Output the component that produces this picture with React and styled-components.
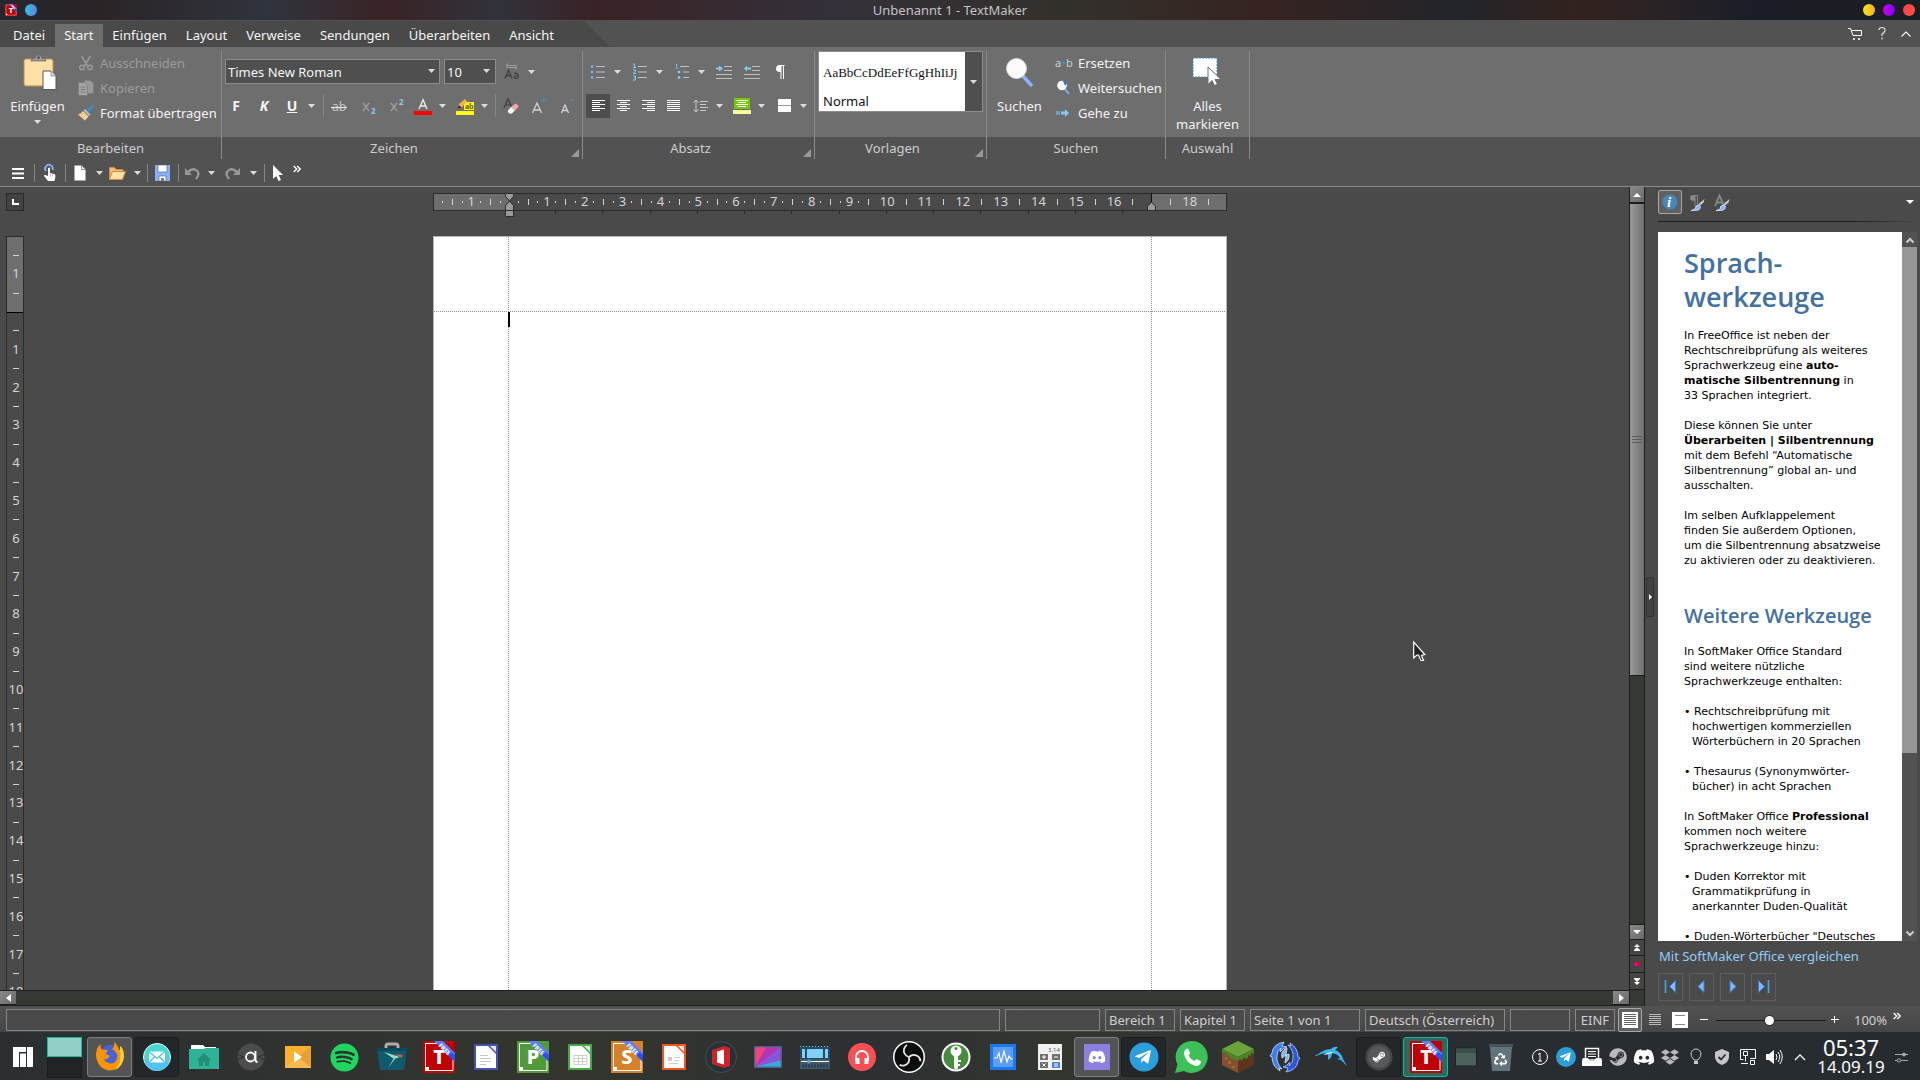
import React from 'react';
import styled, { createGlobalStyle, css } from 'styled-components';
import { FaSpotify, FaDiscord, FaTelegramPlane, FaSteamSymbol, FaSteam, FaDropbox, FaRecycle } from 'react-icons/fa';

const GlobalStyle = createGlobalStyle`
    * {
        box-sizing: border-box;
    }

    body {
        margin: 0;
        overflow: hidden;
        background: #4a4a4a;
        font-family: 'Noto Sans', 'Open Sans', sans-serif;
        font-size: 13px;
        color: #f4f4f4;
    }

    button, select, input {
        font: inherit;
        color: inherit;
        margin: 0;
    }

    button {
        display: flex;
        align-items: center;
        justify-content: center;
        padding: 0;
        border: 0;
        background: none;
    }

    svg {
        display: block;
        flex: none;
        overflow: visible;
    }

    p, h1, h2, ul {
        margin: 0;
        padding: 0;
    }
`;

const Screen = styled.div`
    display: flex;
    flex-direction: column;
    height: 100vh;
`;

/* ---------- title bar ---------- */

const TitleBar = styled.header`
    display: flex;
    align-items: center;
    height: 20px;
    padding: 0 5px;
    color: #c4c4c6;
    background: linear-gradient(90deg, #25272e 0, #2a2427 5%, #30343d 14%, #3a2326 20%, #30323b 26%, #3a2326 31%, #33303a 43%, #33302b 56%, #362321 66%, #22252a 76%, #33221f 82%, #2a2325 86%, #1b1e26 91%, #1a1d24 100%);
`;

const Title = styled.span`
    padding-right: 20px;
`;

const TitleSide = styled.div`
    display: flex;
    flex: 1;
    gap: 8px;
    justify-content: ${p => (p.$end ? 'flex-end' : 'flex-start')};
`;

const Dot = styled.button`
    width: 12px;
    height: 12px;
    border-radius: 50%;
    background: ${p => p.$color};
`;

/* ---------- ribbon ---------- */

const TabRow = styled.nav`
    display: flex;
    align-items: flex-end;
    height: 27px;
    background: #525252;
`;

const TabStrip = styled.div`
    display: flex;
    align-items: flex-end;
    height: 26px;
    padding: 0 46px 0 4px;
    background: #494949;
    clip-path: polygon(0 0, calc(100% - 26px) 0, 100% 100%, 0 100%);
`;

const Tab = styled.button`
    height: 23px;
    padding: 0 10px 2px 9px;
    background: ${p => (p.$active ? '#6e6e6e' : 'none')};
`;

const TabTools = styled.div`
    display: flex;
    flex: 1;
    align-self: center;
    align-items: center;
    justify-content: flex-end;
    gap: 15px;
    padding-right: 9px;
`;

const Ribbon = styled.section`
    display: flex;
    height: 115px;
    padding: 4px 0 3px;
    background: linear-gradient(#6e6e6e 90px, #525252 90px);
`;

const Group = styled.div`
    display: flex;
    flex-direction: column;
    width: ${p => p.$w}px;
    border-right: 1px solid #8a8a8a;
`;

const GroupBody = styled.div`
    display: flex;
    height: 86px;
    padding-left: ${p => p.$pad || 0}px;
    flex-direction: ${p => (p.$column ? 'column' : 'row')};
`;

const GroupLabel = styled.div`
    display: flex;
    align-items: center;
    justify-content: center;
    flex: 1;
    position: relative;
    padding-right: ${p => (p.$corner ? 16 : 0)}px;
    color: #cdcdcd;

    svg {
        position: absolute;
        right: 3px;
        bottom: 2px;
    }
`;

const BigButton = styled.button`
    flex-direction: column;
    justify-content: flex-start;
    width: ${p => p.$w}px;
    height: 86px;
    padding-top: 3px;
    line-height: 18px;
`;

const BigIcon = styled.span`
    display: flex;
    align-items: center;
    height: 37px;
    margin-bottom: 6px;
`;

const SmallList = styled.div`
    display: flex;
    flex-direction: column;
    padding-left: 3px;
`;

const SmallButton = styled.button`
    justify-content: flex-start;
    gap: 6px;
    height: 25px;
    padding-bottom: 2px;
    color: ${p => (p.disabled ? '#9c9c9c' : '#f4f4f4')};
`;

const ToolRow = styled.div`
    display: flex;
    align-items: center;
    gap: ${p => p.$gap || 0}px;
    height: 25px;
    margin-top: ${p => (p.$first ? 8 : 9)}px;
    padding-left: ${p => p.$pad || 0}px;
`;

const Tool = styled.button`
    width: ${p => p.$w || 28}px;
    height: 24px;
    font-size: 14px;
    margin-right: ${p => p.$after || 0}px;
    background: ${p => (p.$active ? '#4e4e4e' : 'none')};
`;

const DropTool = styled.button`
    width: 38px;
    height: 24px;
    margin-right: ${p => p.$after || 0}px;
    margin-left: ${p => p.$before || 0}px;

    > span:first-child {
        display: flex;
        width: 24px;
        justify-content: center;
    }

    > span:last-child {
        display: flex;
        width: 14px;
        justify-content: center;
    }
`;

const Divider = styled.i`
    flex: none;
    width: 1px;
    height: ${p => p.$h || 23}px;
    margin: 0 ${p => p.$r}px 0 ${p => p.$l}px;
    background: #858585;
`;

const SelectBox = styled.label`
    display: flex;
    position: relative;
    width: ${p => p.$w}px;
    height: 25px;

    select {
        appearance: none;
        width: 100%;
        padding: 0 2px;
        border: 1px solid #8c8c8c;
        border-radius: 0;
        background: #4f4f4f;
    }

    svg {
        position: absolute;
        right: ${p => p.$arrow}px;
        top: 10px;
        pointer-events: none;
    }
`;

const StyleBox = styled.div`
    display: flex;
    width: 165px;
    height: 61px;
    border: 1px solid #8c8c8c;
    background: #fff;
`;

const StylePreview = styled.button`
    flex: 1;
    flex-direction: column;
    align-items: flex-start;
    justify-content: flex-start;
    padding: 12px 0 0 4px;
    color: #111;
    line-height: 18px;
    gap: 10px;

    span:first-child {
        font-family: 'Liberation Serif', serif;
        font-size: 13px;
    }
`;

const StyleMore = styled.button`
    width: 17px;
    background: #4f4f4f;
`;

const QuickBar = styled.div`
    display: flex;
    align-items: center;
    height: 25px;
    padding: 0 0 2px 10px;
    background: #525252;
    border-bottom: 1px solid #8a8a8a;
`;

const Quick = styled.button`
    flex: none;
    width: ${p => p.$w || 24}px;
    height: 22px;
`;

/* ---------- work area ---------- */

const Main = styled.main`
    display: flex;
    flex: 1;
    min-height: 0;
`;

const EditorColumn = styled.div`
    display: flex;
    flex-direction: column;
    flex: 1;
    min-width: 0;
`;

const Workspace = styled.div`
    display: grid;
    flex: 1;
    min-height: 0;
    grid-template-columns: 31px 1fr;
    grid-template-rows: 49px minmax(0, 1fr);
    overflow: hidden;
    background: #4a4a4a;
`;

const TabKind = styled.button`
    width: 18px;
    height: 18px;
    margin: 6px 0 0 6px;
    border: 1px solid #2b2b2b;
    background: #404340;
`;

const RulerHolder = styled.div`
    position: relative;
    width: 794px;
    margin: 6px auto 0;
`;

const HRuler = styled.div`
    display: grid;
    grid-template-columns: 1fr repeat(20, 2fr) 1fr;
    height: 18px;
    color: #d4d4d4;
    box-shadow: inset 0 0 0 1px #2b2b2b;
    background: linear-gradient(90deg, #6e6e6e 76px, #4a4a4a 76px, #4a4a4a calc(100% - 76px), #6e6e6e calc(100% - 76px));
`;

const HCell = styled.div`
    display: flex;
    align-items: center;
    min-width: 0;
`;

const Tick = styled.i`
    flex: none;
    width: ${p => (p.$vertical ? 6 : 1)}px;
    height: ${p => (p.$vertical ? 1 : 6)}px;
    background: #d4d4d4;
`;

const Mark = styled.span`
    display: flex;
    flex: 1;
    align-items: center;
    justify-content: center;
    line-height: 16px;

    b {
        width: ${p => (p.$dots ? 17 : 20)}px;
        padding-bottom: 2px;
        font-weight: 400;
        text-align: center;
    }

    i {
        width: 1px;
        height: 2px;
        background: #d4d4d4;
    }
`;

const TabStops = styled.div`
    display: grid;
    grid-template-columns: repeat(13, 1fr);
    width: 614px;
    height: 3px;
    margin-left: 76px;

    i {
        border-right: 1px solid #2b2b2b;
    }
`;

const Marker = styled.svg`
    position: absolute;
    top: 0;
    left: ${p => p.$left};
`;

const VRulerHolder = styled.div`
    width: 18px;
    margin-left: 6px;
    overflow: hidden;
`;

const VRuler = styled.div`
    display: grid;
    grid-template-rows: 1fr repeat(29, 2fr) 1fr;
    height: 1134px;
    color: #d4d4d4;
    box-shadow: inset 0 0 0 1px #2b2b2b;
    background: linear-gradient(#6e6e6e 76px, #000 76px, #000 77px, #4a4a4a 77px);
`;

const VCell = styled.div`
    display: flex;
    flex-direction: column;
    align-items: center;
    min-height: 0;
`;

const Page = styled.article`
    position: relative;
    width: 794px;
    height: 1123px;
    margin: 0 auto;
    border: 1px solid #b4b4b4;
    background: #fff;
`;

const Guide = styled.i`
    position: absolute;
    background: repeating-linear-gradient(${p => (p.$across ? '90deg' : '180deg')}, #8e8e8e 0 1px, #fff 1px 2px);
    ${p => (p.$across ? 'left: 0; right: 0; top: 74px; height: 1px;' : 'top: 0; bottom: 0; width: 1px;')}
    ${p => p.$side && `${p.$side}: 74px;`}
`;

const Caret = styled.i`
    position: absolute;
    left: 74px;
    top: 75px;
    width: 2px;
    height: 15px;
    background: #000;
`;

const Pointer = styled.svg`
    position: absolute;
    left: 1413px;
    top: 641px;
`;

const HScroll = styled.div`
    display: flex;
    justify-content: space-between;
    height: 16px;
    border: 1px solid #1f1f1f;
    border-width: 1px 0;
    background: #363833;
`;

const VScroll = styled.div`
    display: flex;
    flex-direction: column;
    width: 16px;
    padding-bottom: 16px;
    background: #363833;
    border: 1px solid #1c1c1c;
    border-width: 0 1px;
`;

const ScrollButton = styled.button`
    flex: none;
    width: ${p => p.$w || 14}px;
    height: ${p => p.$h}px;
    border-bottom: 1px solid #1c1c1c;
    background: ${p => (p.$flat ? '#444644' : 'linear-gradient(135deg, #8a8a8a, #6a6a6a)')};
`;

const Thumb = styled.div`
    display: flex;
    align-items: center;
    justify-content: center;
    flex: 474;
    border-top: 1px solid #1c1c1c;
    border-bottom: 1px solid #1c1c1c;
    background: linear-gradient(90deg, #999, #707070);
`;

const Track = styled.div`
    flex: 249;
    border-bottom: 1px solid #1c1c1c;
`;

/* ---------- sidebar ---------- */

const Sidebar = styled.aside`
    display: flex;
    width: 275px;
    padding-left: 1px;
    background: #4a4a4a;
`;

const Handle = styled.button`
    align-self: center;
    width: 8px;
    height: 40px;
    border: 1px solid #333;
    border-radius: 2px;
    background: #404340;
`;

const SideBody = styled.div`
    display: flex;
    flex-direction: column;
    flex: 1;
    min-width: 0;
    margin: 0 3px 0 4px;
`;

const SideTools = styled.div`
    display: flex;
    align-items: center;
    height: 35px;
    padding-bottom: 4px;
    margin-bottom: 10px;
    border-bottom: 1px solid transparent;
    border-image: linear-gradient(90deg, #1e1e1e 75%, #4a4a4a) 1;
`;

const SideTool = styled.button`
    width: ${p => p.$w || 24}px;
    height: 24px;
    border: 1px solid ${p => (p.$active ? '#a8a8a8' : 'transparent')};
    border-radius: 2px;
    background: ${p => (p.$active ? '#606060' : 'none')};
    margin-left: ${p => p.$left || 0}px;
`;

const Spacer = styled.span`
    flex: 1;
`;

const InfoRow = styled.div`
    display: flex;
    flex: 1;
    min-height: 0;
`;

const Info = styled.section`
    flex: 1;
    overflow: hidden;
    padding: 14px 0 0 26px;
    background: #fff;
    color: #000;
    font-family: 'DejaVu Sans', Verdana, sans-serif;
    font-size: 11px;
    line-height: 15px;
    white-space: nowrap;

    h1, h2 {
        color: #4471a3;
        font-family: 'Open Sans', 'Noto Sans', sans-serif;
        font-weight: 600;
        line-height: 34px;
    }

    h1 {
        margin-bottom: 14px;
        font-size: 27px;
    }

    h2 {
        margin: 31px 0 11px;
        font-size: 20px;
    }

    p {
        margin-bottom: 15px;
    }

    ul {
        list-style: none;
    }

    li {
        margin-bottom: 15px;
        padding-left: 8px;
        text-indent: -8px;
    }
`;

const InfoScroll = styled.div`
    display: flex;
    flex-direction: column;
    width: 15px;
    background: #525252;

    button {
        height: 15px;
    }

    div {
        flex: 506;
        background: #969696;
    }

    i {
        flex: 173;
    }
`;

const CompareLink = styled.a`
    display: block;
    padding: 6px 0 0 1px;
    height: 32px;
    color: #93cdf8;
    line-height: 18px;
    text-decoration: none;
`;

const NavRow = styled.div`
    display: flex;
    gap: 6px;
    height: 33px;
`;

const NavButton = styled.button`
    width: 25px;
    height: 28px;
    padding-bottom: 2px;
    border: 1px solid #5c5c5c;
`;

/* ---------- status bar ---------- */

const StatusBar = styled.footer`
    display: flex;
    align-items: center;
    height: 26px;
    padding: 2px 0 0 6px;
    color: #cfcfcf;
    background: linear-gradient(#525252, #464646);
`;

const Cell = styled.div`
    flex: ${p => (p.$w ? 'none' : 1)};
    width: ${p => p.$w || 0}px;
    height: 22px;
    margin-right: 5px;
    padding: 0 3px;
    border: 1px solid #858585;
    background: #4a4a4a;
    line-height: 20px;
    white-space: nowrap;
    text-align: ${p => (p.$center ? 'center' : 'left')};
`;

const View = styled.button`
    width: ${p => p.$w || 24}px;
    height: 24px;
    margin-left: ${p => (p.$active ? -2 : 0)}px;
    border: 1px solid ${p => (p.$active ? '#a8a8a8' : 'transparent')};
    border-radius: 2px;
    background: ${p => (p.$active ? '#606060' : 'none')};
`;

const Zoom = styled.input`
    appearance: none;
    width: 110px;
    height: 16px;
    background: linear-gradient(#1a1a1a, #1a1a1a) center / 100% 1px no-repeat;

    &::-webkit-slider-thumb {
        appearance: none;
        width: 9px;
        height: 9px;
        border-radius: 50%;
        background: #fff;
        box-shadow: 0 0 0 1px #333;
    }
`;

const Percent = styled.span`
    width: 45px;
    padding-left: 10px;
`;

/* ---------- desktop panel ---------- */

const Taskbar = styled.nav`
    display: flex;
    align-items: center;
    height: 48px;
    padding-top: 2px;
    background: linear-gradient(90deg, #2b2f31 0, #33352e 30%, #2c3032 45%, #33362f 55%, #2a2e32 75%, #262b2f 100%);
`;

const Task = styled.button`
    flex: none;
    width: ${p => p.$w || 45}px;
    height: 40px;
    margin-right: 2px;
    border: 1px solid transparent;
    border-radius: 3px;

    ${p => p.$state === 'open' && css`
        border-color: #1c1f20;
        background: #24272a;
    `}

    ${p => p.$state === 'lit' && css`
        border-color: #7d7f80;
        background: #525456;
    `}

    ${p => p.$state === 'active' && css`
        border-color: #1fb59a;
        background: #2b6a5f;
    `}
`;

const Pager = styled.div`
    display: flex;
    flex-direction: column;
    gap: 1px;
    width: 35px;
    margin-right: 5px;

    button {
        height: 20px;
        background: #222526;
        border: 1px solid #1b1e1f;
    }

    button:first-child {
        background: #92cfc6;
        border-color: #1fb59a;
    }
`;

const Tray = styled.div`
    display: flex;
    flex: 1;
    justify-content: flex-end;
    align-items: center;
    padding-right: 5px;
    color: #e6e6e6;
`;

const TrayButton = styled.button`
    width: 26px;
    height: 30px;
    color: ${p => p.$color || '#fcfcfc'};
`;

const Clock = styled.time`
    display: flex;
    flex-direction: column;
    align-items: center;
    width: 76px;
    color: #fcfcfc;
    font-size: 17px;
    line-height: 20px;

    b {
        font-size: 22px;
        font-weight: 400;
    }
`;

/* ---------- icons ---------- */

const Arrow = () => (
    <svg width="7" height="4" viewBox="0 0 7 4"><path d="M0 0h7L3.5 4z" fill="#dcdcdc" /></svg>
);

const Corner = () => (
    <svg width="8" height="8" viewBox="0 0 8 8"><path d="M8 0v8H0z" fill="#9a9a9a" /></svg>
);

const PasteIcon = () => (
    <svg width="38" height="37" viewBox="-4 0 38 37">
        <rect x="1" y="5" width="29" height="27" rx="2" fill="#ffe0a6" stroke="#c98b45" />
        <path d="M8 7q0-3 4-3 0-3 3.500-3t3.500 3q4 0 4 3z" fill="#9b9b9b" stroke="#555" strokeWidth=".6" />
        <circle cx="15.500" cy="3.500" r="1.500" fill="#5a5a5a" />
        <path d="M20 17h8l5 5v13.500H20z" fill="#fff" stroke="#555" />
        <path d="M28 17v5h5" fill="#ddd" stroke="#777" strokeWidth=".7" />
    </svg>
);

const CutIcon = () => (
    <svg width="16" height="16" viewBox="0 0 16 16" fill="none" stroke="#9a9a9a" strokeWidth="1.500">
        <path d="M3.500 1l6 10M12.500 1l-6 10" />
        <circle cx="4" cy="12.500" r="2.200" /><circle cx="12" cy="12.500" r="2.200" />
    </svg>
);

const CopyIcon = () => (
    <svg width="16" height="16" viewBox="0 0 16 16" fill="#9a9a9a" stroke="#7b7b7b" strokeWidth=".8">
        <path d="M6.500.5h6l3 3v10h-9z" /><path d="M.5 2.500h6l3 3v10h-9z" fill="#a4a4a4" />
        <path d="M2.500 7h5M2.500 9.500h5M2.500 12h5" stroke="#6e6e6e" />
    </svg>
);

const BrushIcon = () => (
    <svg width="16" height="16" viewBox="0 0 16 16">
        <path d="M10 5.500L14.500 1" stroke="#3e8fc4" strokeWidth="2.600" strokeLinecap="round" />
        <path d="M7 4l5.500 5.500-1.500 1.500L5.500 5.500z" fill="#9dc5dc" />
        <path d="M5 6l5.500 5.500L7 15.500 0 9.500q3-.5 5-3.500z" fill="#ffe0a6" stroke="#c98b45" strokeWidth=".7" />
        <path d="M3 10.500l3-2.500M5 12.500l3-2.500" stroke="#c98b45" strokeWidth=".7" />
    </svg>
);

const CaseIcon = () => (
    <svg width="16" height="18" viewBox="0 0 16 18" fill="none" stroke="#a0a0a0">
        <path d="M2 2.500h11M4 .5L2 2.500M2 4.500h11l-2 1.500" />
        <path d="M1 15.500L4.500 7 8 15.500M2.300 12.500h4.500" stroke="#404040" strokeWidth="1.300" />
        <path d="M10 10.500q4-1 4 1.500v3.500M14 12.500q-4 0-4 1.700t4 .5" stroke="#404040" strokeWidth="1.200" />
    </svg>
);

const StrikeIcon = () => (
    <svg width="18" height="16" viewBox="0 0 18 16">
        <text x="2" y="13" fontSize="12" fill="#c4c4c4" fontFamily="Noto Sans">ab</text>
        <path d="M1 9.500h16" stroke="#e6e6e6" strokeWidth="1.200" />
    </svg>
);

const ScriptIcon = ({ up }) => (
    <svg width="16" height="18" viewBox="0 0 16 18">
        <path d="M2 6l6 8M8 6l-6 8" stroke="#9d9d9d" strokeWidth="1.300" />
        <text x="10" y={up ? 8 : 17} fontSize="8" fontWeight="700" fill="#86c8f2" fontFamily="Noto Sans">2</text>
    </svg>
);

const FontColorIcon = () => (
    <svg width="18" height="19" viewBox="0 -3 18 19">
        <path d="M5 10L9 .7 13 10M6.500 7h5" fill="none" stroke="#eee" strokeWidth="1.300" />
        <path d="M0 12h18v4H0z" fill="#f00" />
    </svg>
);

const HighlightIcon = () => (
    <svg width="18" height="19" viewBox="0 -3 18 19">
        <path d="M8 3h10v8H8z" fill="#ff0" />
        <text x="9" y="10" fontSize="8" fontWeight="700" fill="#555" fontFamily="Liberation Serif">ab</text>
        <path d="M1 10l2-5 6-5 2 2.500L6 8z" fill="#f2b24c" />
        <path d="M1 10l2-4 2.500 2.500z" fill="#333" />
        <path d="M0 12h18v4H0z" fill="#ff0" />
    </svg>
);

const EraserIcon = () => (
    <svg width="16" height="16" viewBox="0 0 16 16">
        <path d="M1 10L5 1l4 9M2.500 7h5" fill="none" stroke="#3e3e3e" strokeWidth="1.200" />
        <path d="M7.500 9.500l5-4 3 2-.5 2-4 4z" fill="#f3a5a5" />
        <path d="M5 12.500l3-3.500 3.500 3.500-2.500 3H6.500q-2-1-1.500-3z" fill="#fff" />
    </svg>
);

const SizeIcon = ({ plus }) => (
    <svg width="16" height="18" viewBox="0 0 16 18">
        <path d={plus ? 'M1.500 16L6 6l4.500 10M3 13h6' : 'M2.500 16L6 8l3.500 8M3.500 13.500h5'} fill="none" stroke="#d2d2d2" strokeWidth="1.300" />
        <path d={plus ? 'M10 3h5M12.500.5v5' : 'M10 3h5'} stroke="#3e8fc4" strokeWidth="1" />
    </svg>
);

const ListIcon = ({ kind }) => (
    <svg width="14" height="18" viewBox="0 0 14 18">
        <path d={kind === 'multi' ? 'M5 3.500h9M8 9h6M8 14.500h6' : 'M5 3.500h9M5 9h9M5 14.500h9'} stroke="#c0c0c0" />
        {kind === 'bullet' && <path d="M0 2.500h2v2H0zM0 8h2v2H0zM0 13.500h2v2H0z" fill="#86c8f2" />}
        {kind === 'multi' && <path d="M1 1h1v4M0 5.500h3M3 8h2v2H3zM3 13.500h2v2H3z" fill="#86c8f2" stroke="#86c8f2" strokeWidth=".5" />}
        {kind === 'number' && <path d="M0 1h1.500v3.500M0 4.500h3M0 7h2.500v1.500L0 10.500h3M0 13h2.500v4H0M1 15h1.500" fill="none" stroke="#86c8f2" />}
    </svg>
);

const IndentIcon = ({ out }) => (
    <svg width="16" height="16" viewBox="0 0 16 16">
        <path d="M8 2.500h8M8 6.500h8M0 10.500h16M0 14.500h16" stroke="#c0c0c0" />
        <path d={out ? 'M7 3.500H3v-2L0 4.500l3 3v-2h4z' : 'M0 3.500h3v-2l4 3-4 3v-2H0z'} fill="#86c8f2" />
    </svg>
);

const Pilcrow = () => (
    <svg width="9" height="14" viewBox="0 0 9 14"><path d="M8.500 0v1H8v13H7V1H5.500v13h-1V7Q0 7 0 3.500T4 0z" fill="#fff" /></svg>
);

const AlignIcon = ({ d }) => (
    <svg width="13" height="12" viewBox="0 0 13 12"><path d={d} stroke="#fff" /></svg>
);

const alignPaths = {
    links: 'M0 .5h13M0 2.500h8M0 4.500h13M0 6.500h8M0 8.500h13M0 10.500h8',
    zentriert: 'M0 .5h13M3 2.500h7M0 4.500h13M3 6.500h7M0 8.500h13M3 10.500h7',
    rechts: 'M0 .5h13M5 2.500h8M0 4.500h13M5 6.500h8M0 8.500h13M5 10.500h8',
    blocksatz: 'M0 .5h13M0 2.500h13M0 4.500h13M0 6.500h13M0 8.500h13M0 10.500h13',
};

const SpacingIcon = () => (
    <svg width="15" height="14" viewBox="0 0 15 14" fill="none" stroke="#c8c8c8">
        <path d="M3 1v12M.5 3.500L3 1l2.500 2.500M.5 10.500L3 13l2.500-2.500M7 2.500h8M7 5.500h6M7 8.500h8M7 11.500h6" />
    </svg>
);

const ShadeIcon = () => (
    <svg width="18" height="16" viewBox="0 0 18 16">
        <path d="M1 0h16v11H1z" fill="#73c800" /><path d="M0 12h18v4H0z" fill="#ffff9c" />
        <path d="M3 2.500h12M5 4.500h8M3 6.500h12M5 8.500h8" stroke="#fff" />
    </svg>
);

const BorderIcon = () => (
    <svg width="13" height="13" viewBox="0 0 13 13"><path d="M0 0h13v13H0z" fill="#fff" /><path d="M0 6.500h13" stroke="#999" /></svg>
);

const SearchIcon = () => (
    <svg width="30" height="32" viewBox="0 0 30 32">
        <path d="M17 18l10 11" stroke="#8ab4ff" strokeWidth="3.400" />
        <circle cx="11.500" cy="11.500" r="10" fill="#fafafa" stroke="#d8d8d8" />
    </svg>
);

const ReplaceIcon = () => (
    <svg width="17" height="12" viewBox="0 0 17 12">
        <text x="0" y="10" fontSize="11" fill="#cfcfcf" fontFamily="Noto Sans">a</text>
        <text x="11" y="10" fontSize="11" fill="#cfcfcf" fontFamily="Noto Sans">b</text>
        <path d="M6 5.500h2V4l3 2-3 2V6.500H6z" fill="#3e8fc4" />
    </svg>
);

const NextIcon = () => (
    <svg width="17" height="15" viewBox="0 0 17 15">
        <path d="M9 8l5 6" stroke="#8ab4ff" strokeWidth="1.800" />
        <circle cx="7" cy="5.500" r="4.800" fill="#fafafa" /><path d="M8 1h5l-3 5z" fill="#3e6fb0" />
    </svg>
);

const GotoIcon = () => (
    <svg width="17" height="8" viewBox="0 0 17 8"><path d="M2 2v4M4 2v4" stroke="#86c8f2" /><path d="M6 2.500h4V0l4 4-4 4V5.500H6z" fill="#86c8f2" /></svg>
);

const SelectAllIcon = () => (
    <svg width="31" height="32" viewBox="0 0 31 32">
        <path d="M1 1h24v19H1z" fill="#fff" stroke="#3e8fc4" strokeDasharray="2 1" />
        <path d="M16 10v17.500l4-4 2.500 5 3-1.300L23 22.500h6z" fill="#fff" stroke="#6e6e6e" />
    </svg>
);

const HandIcon = () => (
    <svg width="13" height="18" viewBox="0 0 13 18">
        <path d="M3 7A3.800 3.800 0 1 1 9.500 6" fill="none" stroke="#8ab4ff" strokeWidth="1.700" />
        <path d="M5 4q1.500-1 2 0v5l4 1q1.500.5 1.500 2L11.500 17H5L1 12q0-1.500 1.500-1L5 12z" fill="#fff" />
        <path d="M7.500 10v2.500M9.500 10.500v2" stroke="#888" strokeWidth=".6" />
    </svg>
);

const NewIcon = () => (
    <svg width="12" height="16" viewBox="0 0 12 16"><path d="M.5.5h7l4 4v11H.5z" fill="#fff" /><path d="M7.500.5v4h4" fill="none" stroke="#777" strokeWidth=".8" /></svg>
);

const FolderIcon = () => (
    <svg width="17" height="14" viewBox="0 0 17 14">
        <path d="M.5 12.500V1.500h5l1.500 2h7v2" fill="#f2bd77" stroke="#c98b45" />
        <path d="M.5 13l3-7.500h13l-3 8h-13z" fill="#ffe0a6" stroke="#c98b45" />
    </svg>
);

const SaveIcon = () => (
    <svg width="15" height="16" viewBox="0 0 15 16">
        <path d="M0 0h15v16H0z" fill="#8ab0f8" /><path d="M3 0h9v7H3zM4 11h7v5H4z" fill="#fff" stroke="#4a5f95" strokeWidth=".6" />
        <path d="M6 13h3v3H6z" fill="#777" />
    </svg>
);

const UndoIcon = ({ redo }) => (
    <svg width="15" height="13" viewBox="0 0 15 13">
        <g transform={redo ? 'translate(15 0) scale(-1 1)' : undefined}>
            <path d="M3 5.500q3-4 7-3 4.500 2 3 6l-2 3.500" fill="none" stroke="#979797" strokeWidth="2.400" /><path d="M0 1v7h7z" fill="#979797" />
        </g>
    </svg>
);

const CartIcon = () => (
    <svg width="15" height="12" viewBox="0 0 15 12">
        <path d="M0 .5h2.500l2.500 7h8.500v-5H3.500" fill="none" stroke="#fff" /><path d="M5 10h2v2H5zM10 10h2v2h-2z" fill="#ddd" />
    </svg>
);

const MoreIcon = ({ w = 8 }) => (
    <svg width={w} height="16" viewBox={`0 0 ${w} 16`}><path d="M.7 1l3 3-3 3M4.200 1l3 3-3 3" fill="none" stroke="#fff" strokeWidth="1.400" /></svg>
);

const GripIcon = () => (
    <svg width="10" height="8" viewBox="0 0 10 8"><path d="M0 .5h10M0 3.500h10M0 6.500h10" stroke="#5c5c5c" /></svg>
);

const Triangle = ({ d, w = 8, h = 6, fill = '#fff' }) => (
    <svg width={w} height={h} viewBox={`0 0 ${w} ${h}`}><path d={d} fill={fill} /></svg>
);

const InfoIcon = () => (
    <svg width="16" height="16" viewBox="0 0 16 16">
        <circle cx="8" cy="8" r="7.500" fill="#4487b8" />
        <text x="5" y="13" fontSize="15" fontStyle="italic" fontWeight="700" fill="#fff" fontFamily="Liberation Serif">i</text>
    </svg>
);

const BrushOver = ({ letter }) => (
    <svg width="16" height="17" viewBox="0 0 16 17">
        {letter
            ? <path d="M1 12L5.500 1.500 10 12M2.500 8.500h6" fill="none" stroke="#888" strokeWidth="1.800" />
            : <path d="M9 1v11H8V2H6.500v10h-1V7Q1 7 1 4t3-3z" fill="#888" />}
        <path d="M9.500 10L15.500 5l-1 3.500-3.500 3z" fill="#ccc" />
        <path d="M2 16.500l4-1.500q0-4 4-4l1.500 1.500q0 4-5 4z" fill="#8ab4ff" stroke="#fff" strokeWidth=".6" />
    </svg>
);

const NavIcon = ({ next, end }) => (
    <svg width="13" height="13" viewBox="0 0 13 13">
        <g transform={next ? 'translate(13 0) scale(-1 1)' : undefined}>
            <path d={end ? 'M11.500.5v12L5.500 6.500z' : 'M9 .5v12L3 6.500z'} fill="#8ab4ff" stroke="#2f81ba" />
            {end && <path d="M1.500 0v13" stroke="#4aa3e0" strokeWidth="1.600" />}
        </g>
    </svg>
);

const OfficeTile = ({ letter, color, size = 32 }) => (
    <svg width={size} height={size} viewBox="0 0 32 32">
        <path d="M0 0h32v32H0z" fill={color} />
        <path d="M2.500 26V2.500H15M30 18v11.500H6" fill="none" stroke="#fff" />
        <path d="M2 26h4v4H2z" fill="#fff" />
        <text x="16" y="23" textAnchor="middle" fontSize="20" fontWeight="800" fill="#fff" fontFamily="Noto Sans">{letter}</text>
        <path d="M11 0h9l12 12v9z" fill="#5b7dff" />
        <path d="M26 9l6 5v7l-6-6z" fill="#2a50ee" />
        <text x="15" y="5" fontSize="6" fontWeight="700" fill="#fff" fontFamily="Noto Sans" transform="rotate(44 15 5)">FREE</text>
    </svg>
);

const LibreDoc = ({ color, kind }) => (
    <svg width="26" height="28" viewBox="0 0 26 28">
        <path d="M1 1h24v26H1z" fill={color} />
        <path d="M3 3h12l8 8v14H3z" fill="#fdfdfd" />
        <path d="M17 3h6v6z" fill="#fff" opacity=".85" />
        {kind === 'text' && <path d="M7 12.500h8M7 15.500h11M7 18.500h11M7 21.500h6" stroke="#c6c6c6" />}
        {kind === 'sheet' && <path d="M7 12.500h13v9H7zM7 15.500h13M7 18.500h13M11.500 12.500v9M15.500 12.500v9" fill="none" stroke="#cfcfcf" />}
        {kind === 'slides' && <path d="M7 14h4v4H7zM13 14h6v1h-6zM13 17h5v1h-5zM8 20h9v1H8z" fill="#cfcfcf" />}
    </svg>
);

const Round = ({ fill, r = 14, stroke, children }) => (
    <svg width="32" height="32" viewBox="0 0 32 32"><circle cx="16" cy="16" r={r} fill={fill} stroke={stroke} />{children}</svg>
);

const ManjaroIcon = () => (
    <svg width="20" height="20" viewBox="0 0 20 20"><path d="M0 0h13v5H6v15H0zM7 6.500h6V20H7zM14 0h6v20h-6z" fill="#fff" /></svg>
);

const FirefoxIcon = () => (
    <svg width="32" height="32" viewBox="0 0 32 32">
        <circle cx="16" cy="15" r="11" fill="#4a62d8" />
        <path d="M3 8q-2 5-.5 10Q5 28 15 29.500q11 0 14-11Q31 8 26 5q1 4-.5 5Q24 4 20 1q1 5-2 7 7 4 5 10-3 6-8 4-4-1-5-4 2 1 4-1 2-1 1-3-3 0-3-2l2-3Q9 9 7 8 6 5 7 3 4 5 3 8z" fill="#ff9400" />
        <path d="M26 5q4 3 4 11-1 9-9 13 6-7 5-13 1-4-.5-6 1-2 .5-5z" fill="#ffd12e" />
    </svg>
);

const MailIcon = () => (
    <Round fill="#47d7cf" r={13.5} stroke="#e8ffff">
        <path d="M3.500 18a12.500 12 0 0 0 25 0z" fill="#52c2f0" />
        <path d="M8 10.500h16v11H8z" fill="#fff" /><path d="M8 10.500l8 7 8-7M8 21.500l6-6M24 21.500l-6-6" fill="none" stroke="#45c5dc" strokeWidth="1.200" />
    </Round>
);

const HomeFolderIcon = () => (
    <svg width="32" height="32" viewBox="0 0 32 32">
        <path d="M3 4h12l2 2h11v8H3z" fill="#fff" /><path d="M1 8h14l3-1h13v21H1z" fill="#2fb398" />
        <path d="M16 12l-7 7h2v6h4v-4h2v4h4v-6h2z" fill="#1f8f79" />
    </svg>
);

const AnboxIcon = () => (
    <Round fill="#4c4c4d" r={13.5}>
        <path d="M2.500 13l6 3-6 3M29.500 13l-6 3 6 3" fill="none" stroke="#2c2f31" />
        <circle cx="15.500" cy="16" r="4.500" fill="none" stroke="#fff" strokeWidth="1.800" />
        <path d="M20.500 10v9q0 2 2 2" fill="none" stroke="#fff" strokeWidth="1.800" />
    </Round>
);

const PlayIcon = () => (
    <svg width="32" height="32" viewBox="0 0 32 32">
        <path d="M3 5h26v22H3z" fill="#fbb02f" /><path d="M16 16L29 5v22z" fill="#e7a130" /><path d="M3 27l13-11 13 11z" fill="#f7bb55" />
        <path d="M12 10.500v11l8-5.500z" fill="#fff" />
    </svg>
);

const SnapIcon = () => (
    <svg width="32" height="32" viewBox="0 0 32 32">
        <path d="M10 7V5q0-2 2-2h8q2 0 2 2v2" fill="none" stroke="#a9adae" strokeWidth="3" />
        <path d="M1 7h30l-3 22H4z" fill="#0f5a6d" /><path d="M1 7h30v3H1z" fill="#0b4a5b" />
        <path d="M8 11l16 5-6 2zM12 27l6-10 4-3z" fill="#9adbc4" /><path d="M19 13l7 1v3z" fill="#e8583e" />
    </svg>
);

const MsOfficeIcon = () => (
    <Round fill="#26323a" r={15.5} stroke="#3f4d55">
        <path d="M7 9l12-4 6 2v18l-6 2-12-4z" fill="#d02028" /><path d="M12 10.500l7-2v15l-7-2z" fill="#fff" />
    </Round>
);

const KdenliveIcon = () => (
    <svg width="32" height="32" viewBox="0 0 32 32">
        <path d="M2 5h28v22H2z" fill="#4b6180" /><path d="M3.500 6.500h25v19h-25z" fill="#8a55d8" />
        <path d="M3.500 6.500H14L3.500 25.500z" fill="#f6427a" /><path d="M14 6.500h14.500L3.500 25.500z" fill="#b336b0" />
        <path d="M3.500 25.500l25-6v6z" fill="#38a9d8" />
    </svg>
);

const FilmIcon = () => (
    <svg width="32" height="32" viewBox="0 0 32 32">
        <path d="M1 5h30v13H1z" fill="#274960" /><path d="M8 8h16v9H8zM3 8h3v9H3zM26 8h3v9h-3z" fill="#7fd0fb" />
        <path d="M1 5.500h30" stroke="#8db0c3" strokeDasharray="1 2" />
        <path d="M1 18h30v10H1z" fill="#40586a" /><path d="M2 20.500h28" stroke="#fff" /><circle cx="10" cy="20.500" r="2" fill="#4ca4f0" />
        <path d="M3 25h26" stroke="#2b3f4e" strokeWidth="3" strokeDasharray="2 1" />
    </svg>
);

const HeadphoneIcon = () => (
    <Round fill="#fb4f55">
        <path d="M10 20v-4a6 6 0 0 1 12 0v4" fill="none" stroke="#fff" strokeWidth="2" /><path d="M9.500 17h4v6h-4zM18.500 17h4v6h-4z" fill="#fff" />
    </Round>
);

const obsBlade = 'M16 16q-6-2-5-8 1-3 3-4';

const ObsIcon = () => (
    <Round fill="#fff" r={16}>
        <circle cx="16" cy="16" r="14.500" fill="#0c0c0c" />
        <g fill="none" stroke="#e8e8e8" strokeWidth="1.800">
            <path d={obsBlade} />
            <path d={obsBlade} transform="rotate(120 16 16)" />
            <path d={obsBlade} transform="rotate(240 16 16)" />
        </g>
    </Round>
);

const KeyIcon = () => (
    <Round fill="#fff" r={14.5}>
        <circle cx="16" cy="16" r="12.500" fill="#458c3c" />
        <circle cx="16" cy="10" r="5.500" fill="#fff" /><circle cx="16" cy="7.500" r="1.500" fill="#458c3c" />
        <path d="M14 14h4v13l-2 2-2-2zM18 19h3v2h-3zM18 23h2v2h-2z" fill="#fff" />
    </Round>
);

const MonitorIcon = () => (
    <svg width="32" height="32" viewBox="0 0 32 32">
        <path d="M3 3h26v26H3z" fill="#1d78f0" /><path d="M6 6h20v20H6z" fill="#5c9df5" />
        <path d="M7 17h3l2-5 2 10 3-12 3 11 2-6 2 3h2" fill="none" stroke="#fff" strokeWidth="1.200" />
    </svg>
);

const CalculatorIcon = () => (
    <svg width="32" height="32" viewBox="0 0 32 32">
        <path d="M4 3h24v26H4z" fill="#f1f1f1" /><text x="14" y="11" fontSize="6" fill="#555" fontFamily="Noto Sans">3.14</text>
        <path d="M6 13h8v6H6zM18 13h8v6h-8zM6 21h8v6H6z" fill="#707070" /><path d="M18 21h8v6h-8z" fill="#4a80e8" />
        <path d="M8 16h4M10 14v4M20 16h4M8.500 22.500l3 3M11.500 22.500l-3 3M20 23h4M20 25h4" stroke="#fff" />
    </svg>
);

const DiscordIcon = () => (
    <svg width="32" height="32" viewBox="0 0 32 32"><path d="M3 3h26v26H3z" fill="#8b80e0" /><g transform="translate(7 7)"><FaDiscord size={18} color="#fff" /></g></svg>
);

const TelegramIcon = ({ size = 32 }) => (
    <svg width={size} height={size} viewBox="0 0 32 32"><circle cx="16" cy="16" r="14.500" fill="#2b9fdc" /><g transform="translate(6 7)"><FaTelegramPlane size={18} color="#fff" /></g></svg>
);

const WhatsappIcon = () => (
    <svg width="32" height="32" viewBox="0 0 32 32">
        <path d="M16 0a16 16 0 1 1-7 30L0 32l2.500-8.500A16 16 0 0 1 16 0z" fill="#3dc05a" />
        <path d="M11 8q1.500-1 2.500.5l1.500 3q.5 1-1.500 3 2 4 6 5.500l2-2 4 2q1 .5 0 2.500-2 3-5 2.500Q11 22.500 9 13q0-3.500 2-5z" fill="#fff" />
    </svg>
);

const GrassIcon = () => (
    <svg width="32" height="32" viewBox="0 0 32 32">
        <path d="M0 8l16 8v16L0 24z" fill="#83512f" /><path d="M32 8l-16 8v16l16-8z" fill="#5d341d" />
        <path d="M0 8l16-8 16 8-16 8z" fill="#6aa43a" />
        <path d="M0 8l16 8 16-8v5l-3-1v3l-3-1v3l-3 1v-2l-4 4v-2l-3 2-3-2v2l-4-4v2l-3-3v-2l-3 1v-3l-3 1z" fill="#4c8228" />
        <path d="M6 20h3v3H6zM10 25h3v2h-3zM3 16h2v3H3z" fill="#9c6840" />
    </svg>
);

const swirl = 'M15 1Q4 3 3 12l-2 3 2 1q0 9 8 14l-1-3 3 1q-6-6-5-13 0-5 4-8l-1 4q3-4 7-5l-5-1z';

const WaterfoxIcon = () => (
    <svg width="32" height="32" viewBox="0 0 32 32">
        <path d={swirl} fill="#3f7ef0" stroke="#cfe2ff" strokeWidth=".8" />
        <path d={swirl} fill="#2a57dc" stroke="#b8d0ff" strokeWidth=".8" transform="rotate(180 16 16)" />
        <path d="M18 7q-7 3-5 10l4-3-1 8q5-3 4-9l-3 1z" fill="#7fb0fa" stroke="#eef5ff" strokeWidth=".7" />
    </svg>
);

const DolphinIcon = () => (
    <svg width="34" height="32" viewBox="0 0 34 32">
        <path d="M1 14q3-1 5-3Q11 8 16 8q3-3 7-2l-3 3q6 2 8 9l4 7-6-6-4-1 3-1q-2-4-8-5 0 5-4 7 1-4-1-7-5 0-11 3l-1-1z" fill="#38b6f6" />
        <path d="M8 14q6-4 11-2-5 0-7 1.500z" fill="#eaf8ff" />
    </svg>
);

const SteamIcon = () => (
    <Round fill="#454748" r={13.5}>
        <circle cx="16" cy="16" r="11" fill="#57595a" /><g transform="translate(9 9)"><FaSteamSymbol size={14} color="#fff" /></g>
    </Round>
);

const WindowIcon = () => (
    <svg width="22" height="20" viewBox="0 0 22 20"><path d="M.5 1h21v18H.5z" fill="#4a615c" stroke="#1c2422" /><path d="M1 1.500h20V6H1z" fill="#395049" /></svg>
);

const TrashIcon = () => (
    <svg width="26" height="30" viewBox="0 0 26 30">
        <path d="M1 2h24v3H1z" fill="#445459" /><path d="M2 5h22l-2 24H4z" fill="#61747c" />
        <g transform="translate(6 11)"><FaRecycle size={13} color="#fff" /></g>
    </svg>
);

/* ---------- data ---------- */

const tabs = ['Datei', 'Start', 'Einfügen', 'Layout', 'Verweise', 'Sendungen', 'Überarbeiten', 'Ansicht'];

const statusCells = [
    { w: 0 },
    { w: 95 },
    { w: 70, text: 'Bereich 1' },
    { w: 65, text: 'Kapitel 1' },
    { w: 110, text: 'Seite 1 von 1' },
    { w: 140, text: 'Deutsch (Österreich)' },
    { w: 60 },
    { w: 40, text: 'EINF', center: true },
];

const tasks = [
    { name: 'Firefox', icon: <FirefoxIcon />, state: 'lit' },
    { name: 'Mail', icon: <MailIcon />, state: 'open' },
    { name: 'Dateien', icon: <HomeFolderIcon /> },
    { name: 'Anbox', icon: <AnboxIcon /> },
    { name: 'Video', icon: <PlayIcon /> },
    { name: 'Spotify', icon: <FaSpotify size={29} color="#1ed760" /> },
    { name: 'Snap Store', icon: <SnapIcon /> },
    { name: 'TextMaker', icon: <OfficeTile letter="T" color="#c00000" /> },
    { name: 'Writer', icon: <LibreDoc color="#4253b0" kind="text" /> },
    { name: 'PlanMaker', icon: <OfficeTile letter="P" color="#519a3b" /> },
    { name: 'Calc', icon: <LibreDoc color="#44a846" kind="sheet" /> },
    { name: 'Presentations', icon: <OfficeTile letter="S" color="#d5812a" /> },
    { name: 'Impress', icon: <LibreDoc color="#f4561f" kind="slides" /> },
    { name: 'Office', icon: <MsOfficeIcon /> },
    { name: 'Kdenlive', icon: <KdenliveIcon /> },
    { name: 'Schnitt', icon: <FilmIcon /> },
    { name: 'Musik', icon: <HeadphoneIcon /> },
    { name: 'OBS', icon: <ObsIcon /> },
    { name: 'KeePass', icon: <KeyIcon /> },
    { name: 'Systemmonitor', icon: <MonitorIcon /> },
    { name: 'Rechner', icon: <CalculatorIcon /> },
    { name: 'Discord', icon: <DiscordIcon />, state: 'lit' },
    { name: 'Telegram', icon: <TelegramIcon />, state: 'open' },
    { name: 'WhatsApp', icon: <WhatsappIcon /> },
    { name: 'Minecraft', icon: <GrassIcon /> },
    { name: 'Waterfox', icon: <WaterfoxIcon /> },
    { name: 'Dolphin', icon: <DolphinIcon /> },
    { name: 'Steam', icon: <SteamIcon />, state: 'open' },
    { name: 'TextMaker Fenster', icon: <OfficeTile letter="T" color="#c00000" />, state: 'active' },
    { name: 'Desktop', icon: <WindowIcon />, w: 31 },
    { name: 'Papierkorb', icon: <TrashIcon />, w: 35 },
];

const line = { fill: 'none', stroke: '#fcfcfc' };

const tray = [
    { name: 'Benachrichtigungen', icon: <svg width="18" height="18" viewBox="0 0 18 18"><circle cx="9" cy="9" r="7.500" {...line} /><path d="M7 6.500l2-1.500v8M7 13h4" {...line} /></svg> },
    { name: 'Telegram', icon: <TelegramIcon size={22} /> },
    { name: 'Posteingang', icon: <svg width="20" height="20" viewBox="0 0 20 20"><path d="M3.500 1.500h13V13h-13z" {...line} strokeWidth="1.400" /><path d="M6 4.500h8M6 7h8M6 9.500h8" {...line} /><path d="M1 11h5l1.500 3h5l1.500-3h5l1 2v6H0v-6z" fill="#fcfcfc" /></svg> },
    { name: 'Steam', icon: <FaSteam size={18} />, color: '#b8babb' },
    { name: 'Discord', icon: <FaDiscord size={22} /> },
    { name: 'Dropbox', icon: <FaDropbox size={18} />, color: '#b8babb' },
    { name: 'Hinweis', icon: <svg width="12" height="18" viewBox="0 0 12 18"><path d="M4 12Q1 8.500 1 6a5 5 0 0 1 10 0q0 2.500-3 6z" {...line} stroke="#c9c9c9" /><path d="M4 13h4v3H4z" fill="#c9c9c9" /></svg> },
    { name: 'Sicherheit', icon: <svg width="16" height="18" viewBox="0 0 16 18"><path d="M8 1l7 3v5q0 5-7 8-7-3-7-8V4z" fill="#c4c6c7" /><path d="M4.500 9l2.500 2.500 4.500-5" fill="none" stroke="#2a2e32" strokeWidth="1.800" /></svg> },
    { name: 'Netzwerk', icon: <svg width="18" height="18" viewBox="0 0 18 18"><path d="M1.500 11.500v-10h15v9H11M4.500 3.500h4v4h-4zM6.500 7.500v6M1.500 11.500h3M2 15.500h7M11.500 12.500h4v4h-4z" {...line} /></svg> },
    { name: 'Lautstärke', icon: <svg width="18" height="16" viewBox="0 0 18 16"><path d="M1 5h3l5-4v14l-5-4H1z" fill="#fcfcfc" /><path d="M11 5q2 3 0 6M13 3q3.500 5 0 10M15 1q4.500 7 0 14" {...line} /></svg> },
    { name: 'Mehr', icon: <svg width="12" height="7" viewBox="0 0 12 7"><path d="M1 6l5-5 5 5" {...line} strokeWidth="1.300" /></svg> },
];

const hMarks = Array.from({ length: 20 }, (_, i) => i - 1);
const vMarks = Array.from({ length: 29 }, (_, i) => i - 1);

const Drop = ({ label, before, after, children }) => (
    <DropTool aria-label={label} $before={before} $after={after}>
        <span>{children}</span>
        <span><Arrow /></span>
    </DropTool>
);

const HorizontalRuler = () => (
    <RulerHolder>
        <HRuler>
            <HCell><Mark $dots><i /></Mark></HCell>
            {hMarks.map(n => {
                const hidden = n === 0 || n === 17;
                const dots = n < 10;
                return (
                    <HCell key={n}>
                        <Tick />
                        <Mark $dots={dots}>
                            {dots && <i />}
                            <b>{hidden ? '' : Math.abs(n)}</b>
                            {dots && <i />}
                        </Mark>
                    </HCell>
                );
            })}
            <HCell><Tick /></HCell>
        </HRuler>
        <TabStops>{hMarks.slice(0, 13).map(n => <i key={n} />)}</TabStops>
        <Marker $left="72px" width="9" height="24" viewBox="0 0 9 24">
            <path d="M.5.5h8v3l-4 4.500-4-4.500zM.5 23.500v-11l4-4.500 4 4.500v11z" fill="#9a9a9a" stroke="#2b2b2b" />
            <path d="M0 17.500h9" stroke="#2b2b2b" />
        </Marker>
        <Marker $left="calc(100% - 80px)" width="9" height="18" viewBox="0 0 9 18">
            <path d="M4.500 0v9" stroke="#111" />
            <path d="M.5 17.500v-4l4-4.500 4 4.500v4z" fill="#9a9a9a" stroke="#2b2b2b" />
        </Marker>
    </RulerHolder>
);

const VerticalRuler = () => (
    <VRulerHolder>
        <VRuler>
            <VCell />
            {vMarks.map(n => (
                <VCell key={n}>
                    <Tick $vertical />
                    <Mark><b>{n === 0 ? '' : Math.abs(n)}</b></Mark>
                </VCell>
            ))}
        </VRuler>
    </VRulerHolder>
);

const RibbonGroups = () => (
    <Ribbon>
        <Group $w={222}>
            <GroupBody>
                <BigButton $w={75}>
                    <BigIcon><PasteIcon /></BigIcon>
                    <span>Einfügen</span>
                    <svg width="7" height="14" viewBox="0 0 7 14"><path d="M0 5h7L3.500 9z" fill="#dcdcdc" /></svg>
                </BigButton>
                <SmallList>
                    <SmallButton disabled><CutIcon />Ausschneiden</SmallButton>
                    <SmallButton disabled><CopyIcon />Kopieren</SmallButton>
                    <SmallButton><BrushIcon />Format übertragen</SmallButton>
                </SmallList>
            </GroupBody>
            <GroupLabel>Bearbeiten</GroupLabel>
        </Group>

        <Group $w={361}>
            <GroupBody $column>
                <ToolRow $first $pad={3} $gap={4}>
                    <SelectBox $w={215} $arrow={5}>
                        <select aria-label="Schriftart" defaultValue="Times New Roman"><option>Times New Roman</option></select>
                        <Arrow />
                    </SelectBox>
                    <SelectBox $w={52} $arrow={6}>
                        <select aria-label="Schriftgröße" defaultValue="10"><option>10</option></select>
                        <Arrow />
                    </SelectBox>
                    <Drop label="Groß-/Kleinschreibung"><CaseIcon /></Drop>
                </ToolRow>
                <ToolRow>
                    <Tool><b>F</b></Tool>
                    <Tool><b><i>K</i></b></Tool>
                    <Tool><b><u>U</u></b></Tool>
                    <Tool $w={10} aria-label="Unterstreichung"><Arrow /></Tool>
                    <Divider $l={7} $r={1} />
                    <Tool $after={2} aria-label="Durchgestrichen"><StrikeIcon /></Tool>
                    <Tool aria-label="Tiefgestellt"><ScriptIcon /></Tool>
                    <Tool aria-label="Hochgestellt"><ScriptIcon up /></Tool>
                    <Drop label="Schriftfarbe" after={4}><FontColorIcon /></Drop>
                    <Drop label="Hervorheben"><HighlightIcon /></Drop>
                    <Divider $l={4} $r={1} />
                    <Tool aria-label="Formatierung löschen"><EraserIcon /></Tool>
                    <Tool aria-label="Schrift vergrößern"><SizeIcon plus /></Tool>
                    <Tool aria-label="Schrift verkleinern"><SizeIcon /></Tool>
                </ToolRow>
            </GroupBody>
            <GroupLabel $corner>Zeichen<Corner /></GroupLabel>
        </Group>

        <Group $w={232}>
            <GroupBody $column $pad={3}>
                <ToolRow $first>
                    <Drop label="Aufzählung" after={4}><ListIcon kind="bullet" /></Drop>
                    <Drop label="Nummerierung" after={4}><ListIcon kind="number" /></Drop>
                    <Drop label="Gliederung" after={2}><ListIcon kind="multi" /></Drop>
                    <Tool aria-label="Einzug vergrößern"><IndentIcon /></Tool>
                    <Tool aria-label="Einzug verkleinern"><IndentIcon out /></Tool>
                    <Tool aria-label="Absatzmarken"><Pilcrow /></Tool>
                </ToolRow>
                <ToolRow>
                    {Object.keys(alignPaths).map(name => (
                        <Tool key={name} $w={24} $after={1} $active={name === 'links'} aria-label={name}><AlignIcon d={alignPaths[name]} /></Tool>
                    ))}
                    <Drop label="Zeilenabstand" before={2} after={4}><SpacingIcon /></Drop>
                    <Drop label="Schattierung" after={4}><ShadeIcon /></Drop>
                    <Drop label="Umrandung"><BorderIcon /></Drop>
                </ToolRow>
            </GroupBody>
            <GroupLabel $corner>Absatz<Corner /></GroupLabel>
        </Group>

        <Group $w={172}>
            <GroupBody $pad={3}>
                <StyleBox>
                    <StylePreview><span>AaBbCcDdEeFfGgHhIiJj</span><span>Normal</span></StylePreview>
                    <StyleMore aria-label="Weitere Vorlagen"><Arrow /></StyleMore>
                </StyleBox>
            </GroupBody>
            <GroupLabel $corner>Vorlagen<Corner /></GroupLabel>
        </Group>

        <Group $w={179}>
            <GroupBody>
                <BigButton $w={65}><BigIcon><SearchIcon /></BigIcon><span>Suchen</span></BigButton>
                <SmallList>
                    <SmallButton><ReplaceIcon />Ersetzen</SmallButton>
                    <SmallButton><NextIcon />Weitersuchen</SmallButton>
                    <SmallButton><GotoIcon />Gehe zu</SmallButton>
                </SmallList>
            </GroupBody>
            <GroupLabel>Suchen</GroupLabel>
        </Group>

        <Group $w={84}>
            <GroupBody>
                <BigButton $w={83}><BigIcon><SelectAllIcon /></BigIcon><span>Alles<br />markieren</span></BigButton>
            </GroupBody>
            <GroupLabel>Auswahl</GroupLabel>
        </Group>
    </Ribbon>
);

const QuickAccess = () => (
    <QuickBar>
        <Quick $w={16} aria-label="Menü"><svg width="12" height="11" viewBox="0 0 12 11"><path d="M0 1h12M0 5.500h12M0 10h12" stroke="#fff" strokeWidth="2" /></svg></Quick>
        <Divider $h={18} $l={8} $r={2} />
        <Quick aria-label="Touchmodus"><HandIcon /></Quick>
        <Divider $h={18} $l={4} $r={2} />
        <Quick aria-label="Neu"><NewIcon /></Quick>
        <Quick $w={14} aria-label="Neu aus Vorlage"><Arrow /></Quick>
        <Quick $w={22} aria-label="Öffnen"><FolderIcon /></Quick>
        <Quick $w={18} aria-label="Zuletzt geöffnet"><Arrow /></Quick>
        <Divider $h={18} $l={1} $r={2} />
        <Quick aria-label="Speichern"><SaveIcon /></Quick>
        <Divider $h={18} $l={4} $r={1} />
        <Quick aria-label="Rückgängig"><UndoIcon /></Quick>
        <Quick $w={14} aria-label="Rückgängig-Liste"><Arrow /></Quick>
        <Quick $w={28} aria-label="Wiederherstellen"><UndoIcon redo /></Quick>
        <Quick $w={14} aria-label="Wiederherstellen-Liste"><Arrow /></Quick>
        <Divider $h={18} $l={4} $r={1} />
        <Quick aria-label="Objektmodus"><svg width="10" height="16" viewBox="0 0 10 16"><path d="M0 0v14l3.200-3L5.500 16l2.500-1-2.300-5H10z" fill="#fff" /></svg></Quick>
        <Quick $w={14} aria-label="Mehr"><MoreIcon /></Quick>
    </QuickBar>
);

const InfoText = () => (
    <Info>
        <h1>Sprach-<br />werkzeuge</h1>
        <p>
            In FreeOffice ist neben der<br />
            Rechtschreibprüfung als weiteres<br />
            Sprachwerkzeug eine <b>auto-<br />
            matische Silbentrennung</b> in<br />
            33 Sprachen integriert.
        </p>
        <p>
            Diese können Sie unter<br />
            <b>Überarbeiten | Silbentrennung</b><br />
            mit dem Befehl “Automatische<br />
            Silbentrennung” global an- und<br />
            ausschalten.
        </p>
        <p>
            Im selben Aufklappelement<br />
            finden Sie außerdem Optionen,<br />
            um die Silbentrennung absatzweise<br />
            zu aktivieren oder zu deaktivieren.
        </p>
        <h2>Weitere Werkzeuge</h2>
        <p>
            In SoftMaker Office Standard<br />
            sind weitere nützliche<br />
            Sprachwerkzeuge enthalten:
        </p>
        <ul>
            <li>• Rechtschreibprüfung mit<br />hochwertigen kommerziellen<br />Wörterbüchern in 20 Sprachen</li>
            <li>• Thesaurus (Synonymwörter-<br />bücher) in acht Sprachen</li>
        </ul>
        <p>
            In SoftMaker Office <b>Professional</b><br />
            kommen noch weitere<br />
            Sprachwerkzeuge hinzu:
        </p>
        <ul>
            <li>• Duden Korrektor mit<br />Grammatikprüfung in<br />anerkannter Duden-Qualität</li>
            <li>• Duden-Wörterbücher "Deutsches</li>
        </ul>
    </Info>
);

const App = () => (
    <>
        <GlobalStyle />
        <Screen>
            <TitleBar>
                <TitleSide>
                    <OfficeTile letter="T" color="#c00000" size={12} />
                    <Dot aria-label="Anheften" $color="linear-gradient(90deg, #35c0d8, #5a86e8)" />
                </TitleSide>
                <Title>Unbenannt 1 - TextMaker</Title>
                <TitleSide $end>
                    <Dot aria-label="Minimieren" $color="linear-gradient(90deg, #f5e61a, #f9b11f)" />
                    <Dot aria-label="Maximieren" $color="linear-gradient(90deg, #cf00e0, #7a00ff)" />
                    <Dot aria-label="Schließen" $color="linear-gradient(90deg, #ff3b5c, #ff5530)" />
                </TitleSide>
            </TitleBar>

            <TabRow>
                <TabStrip>
                    {tabs.map(name => <Tab key={name} $active={name === 'Start'}>{name}</Tab>)}
                </TabStrip>
                <TabTools>
                    <button aria-label="Shop"><CartIcon /></button>
                    <button aria-label="Hilfe"><svg width="8" height="13" viewBox="0 0 8 13"><path d="M1 3q0-2.500 3-2.500t3 2.500T4 7v2M4 10.500v2" fill="none" stroke="#e0e0e0" strokeWidth="1.200" /></svg></button>
                    <button aria-label="Menüband einklappen"><svg width="10" height="6" viewBox="0 0 10 6"><path d="M.5 5.500L5 1l4.500 4.500" fill="none" stroke="#fff" strokeWidth="1.100" /></svg></button>
                </TabTools>
            </TabRow>
            <RibbonGroups />
            <QuickAccess />

            <Main>
                <EditorColumn>
                    <Workspace>
                        <TabKind aria-label="Tabulatorart"><svg width="7" height="6" viewBox="0 0 7 6"><path d="M1 0v5h6" fill="none" stroke="#fff" strokeWidth="2" /></svg></TabKind>
                        <HorizontalRuler />
                        <VerticalRuler />
                        <Page>
                            <Guide $across />
                            <Guide $side="left" />
                            <Guide $side="right" />
                            <Caret />
                        </Page>
                    </Workspace>
                    <HScroll>
                        <ScrollButton $w={16} $h={14} aria-label="Links"><Triangle d="M6 0v8L1 4z" w={7} h={8} /></ScrollButton>
                        <ScrollButton $w={16} $h={14} aria-label="Rechts"><Triangle d="M1 0v8l5-4z" w={7} h={8} /></ScrollButton>
                    </HScroll>
                </EditorColumn>

                <VScroll>
                    <ScrollButton $h={16} aria-label="Nach oben"><Triangle d="M0 5l4-4 4 4z" /></ScrollButton>
                    <Thumb><GripIcon /></Thumb>
                    <Track />
                    <ScrollButton $h={15} aria-label="Nach unten"><Triangle d="M0 1l4 4 4-4z" /></ScrollButton>
                    <ScrollButton $h={16} $flat aria-label="Vorige Seite"><Triangle d="M3 0l3 3H0zM3 3l3 3H0zM0 6h6v1H0z" w={6} h={7} /></ScrollButton>
                    <ScrollButton $h={17} $flat aria-label="Objektwahl"><svg width="6" height="6" viewBox="0 0 6 6"><circle cx="3" cy="3" r="2.500" fill="#ff0000" /><path d="M0 2h3v3H1z" fill="#e000e0" /></svg></ScrollButton>
                    <ScrollButton $h={17} $flat aria-label="Nächste Seite"><Triangle d="M0 0h6v1H0zM0 1h6L3 4zM0 4h6L3 7z" w={6} h={7} /></ScrollButton>
                </VScroll>

                <Sidebar>
                    <Handle aria-label="Seitenleiste"><Triangle d="M0 0v6l3-3z" w={3} h={6} /></Handle>
                    <SideBody>
                        <SideTools>
                            <SideTool $active aria-label="Info"><InfoIcon /></SideTool>
                            <SideTool $left={3} aria-label="Absatzvorlagen"><BrushOver /></SideTool>
                            <SideTool $left={1} aria-label="Zeichenvorlagen"><BrushOver letter /></SideTool>
                            <Spacer />
                            <SideTool $w={14} aria-label="Optionen"><Triangle d="M0 0h8L4 4z" w={8} h={4} /></SideTool>
                        </SideTools>
                        <InfoRow>
                            <InfoText />
                            <InfoScroll>
                                <button aria-label="Info nach oben"><svg width="8" height="6" viewBox="0 0 8 6"><path d="M.5 5.500L4 2l3.500 3.500" fill="none" stroke="#d0d0d0" strokeWidth="2" /></svg></button>
                                <div />
                                <i />
                                <button aria-label="Info nach unten"><svg width="8" height="6" viewBox="0 0 8 6"><path d="M.5.500L4 4 7.500.5" fill="none" stroke="#d0d0d0" strokeWidth="2" /></svg></button>
                            </InfoScroll>
                        </InfoRow>
                        <CompareLink href="#vergleich">Mit SoftMaker Office vergleichen</CompareLink>
                        <NavRow>
                            <NavButton aria-label="Erste"><NavIcon end /></NavButton>
                            <NavButton aria-label="Zurück"><NavIcon /></NavButton>
                            <NavButton aria-label="Weiter"><NavIcon next /></NavButton>
                            <NavButton aria-label="Letzte"><NavIcon next end /></NavButton>
                        </NavRow>
                    </SideBody>
                </Sidebar>
            </Main>

            <StatusBar>
                {statusCells.map((cell, i) => <Cell key={i} $w={cell.w} $center={cell.center}>{cell.text}</Cell>)}
                <View $active aria-label="Normalansicht"><svg width="16" height="16" viewBox="0 0 16 16"><path d="M0 0h16v16H0z" fill="#fff" /><path d="M2 2.500h12M2 4.500h12M2 6.500h12M2 8.500h12M2 10.500h12M2 12.500h12" stroke="#666" /></svg></View>
                <View $w={26} aria-label="Konzept"><svg width="12" height="12" viewBox="0 0 12 12"><path d="M0 .5h12M0 2.500h12M0 4.500h12M0 6.500h12M0 8.500h12M0 10.500h12" stroke="#bbb" /></svg></View>
                <View aria-label="Masterseiten"><svg width="16" height="16" viewBox="0 0 16 16"><path d="M0 0h16v16H0z" fill="#fff" /><path d="M3 3.500h10M3 12.500h10" stroke="#888" /></svg></View>
                <View aria-label="Verkleinern"><svg width="8" height="8" viewBox="0 0 8 8"><path d="M0 3.500h8" stroke="#fff" /></svg></View>
                <Zoom type="range" aria-label="Zoom" defaultValue="49" />
                <View $w={18} aria-label="Vergrößern"><svg width="8" height="8" viewBox="0 0 8 8"><path d="M0 3.500h8M3.500 0v7" stroke="#fff" /></svg></View>
                <Percent>100%</Percent>
                <View $w={31} aria-label="Mehr Optionen"><MoreIcon w={24} /></View>
            </StatusBar>

            <Taskbar>
                <Task aria-label="Startmenü"><ManjaroIcon /></Task>
                <Pager>
                    <button aria-label="Arbeitsfläche 1" />
                    <button aria-label="Arbeitsfläche 2" />
                </Pager>
                {tasks.map(t => <Task key={t.name} $w={t.w} $state={t.state} aria-label={t.name}>{t.icon}</Task>)}
                <Tray>
                    {tray.map(t => <TrayButton key={t.name} $color={t.color} aria-label={t.name}>{t.icon}</TrayButton>)}
                    <Clock><b>05:37</b>14.09.19</Clock>
                    <TrayButton $color="#9a9c9e" aria-label="Leiste anpassen"><svg width="14" height="12" viewBox="0 0 14 12" fill="none" stroke="#a8aaab"><path d="M0 3.500h13M0 9.500h2M6 9.500h7" /><circle cx="9" cy="3.500" r="1.500" fill="#a8aaab" /><circle cx="4" cy="9.500" r="1.700" /></svg></TrayButton>
                </Tray>
            </Taskbar>
        </Screen>
        <Pointer width="13" height="23" viewBox="0 0 13 23"><path d="M.7 1v16l3.300-3h1.500l2.500 5.500h2.500L8.500 14.500l3.300-1z" fill="#222" stroke="#fff" strokeWidth="1.200" /></Pointer>
    </>
);

export default App;
